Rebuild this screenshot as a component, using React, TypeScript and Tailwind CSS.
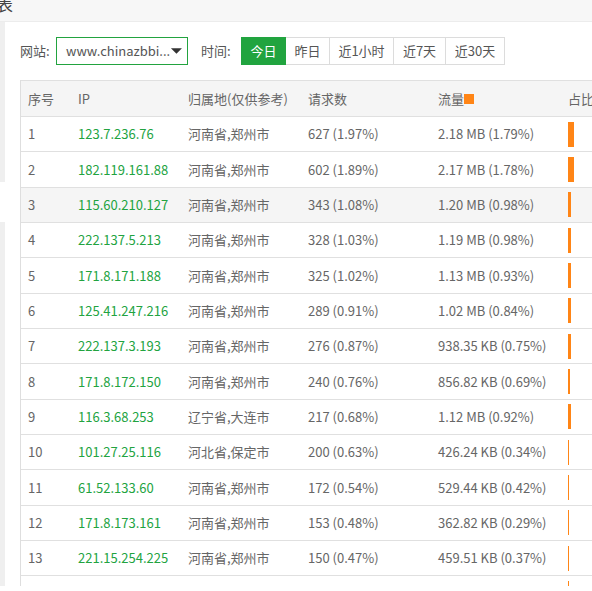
import React from "react";

type Row = { ip: string; loc: string; req: string; flow: string; w: number };

const rows: Row[] = [
  { ip: "123.7.236.76", loc: "河南省,郑州市", req: "627 (1.97%)", flow: "2.18 MB (1.79%)", w: 6 },
  { ip: "182.119.161.88", loc: "河南省,郑州市", req: "602 (1.89%)", flow: "2.17 MB (1.78%)", w: 6 },
  { ip: "115.60.210.127", loc: "河南省,郑州市", req: "343 (1.08%)", flow: "1.20 MB (0.98%)", w: 3 },
  { ip: "222.137.5.213", loc: "河南省,郑州市", req: "328 (1.03%)", flow: "1.19 MB (0.98%)", w: 3 },
  { ip: "171.8.171.188", loc: "河南省,郑州市", req: "325 (1.02%)", flow: "1.13 MB (0.93%)", w: 3 },
  { ip: "125.41.247.216", loc: "河南省,郑州市", req: "289 (0.91%)", flow: "1.02 MB (0.84%)", w: 3 },
  { ip: "222.137.3.193", loc: "河南省,郑州市", req: "276 (0.87%)", flow: "938.35 KB (0.75%)", w: 3 },
  { ip: "171.8.172.150", loc: "河南省,郑州市", req: "240 (0.76%)", flow: "856.82 KB (0.69%)", w: 2 },
  { ip: "116.3.68.253", loc: "辽宁省,大连市", req: "217 (0.68%)", flow: "1.12 MB (0.92%)", w: 3 },
  { ip: "101.27.25.116", loc: "河北省,保定市", req: "200 (0.63%)", flow: "426.24 KB (0.34%)", w: 1 },
  { ip: "61.52.133.60", loc: "河南省,郑州市", req: "172 (0.54%)", flow: "529.44 KB (0.42%)", w: 1 },
  { ip: "171.8.173.161", loc: "河南省,郑州市", req: "153 (0.48%)", flow: "362.82 KB (0.29%)", w: 1 },
  { ip: "221.15.254.225", loc: "河南省,郑州市", req: "150 (0.47%)", flow: "459.51 KB (0.37%)", w: 1 },
  { ip: "", loc: "", req: "", flow: "", w: 1 },
];

const btns = [
  { t: "今日", w: "w-[45px]", active: true },
  { t: "昨日", w: "w-[44px]" },
  { t: "近1小时", w: "w-[64px]" },
  { t: "近7天", w: "w-[52px]" },
  { t: "近30天", w: "w-[59px]" },
];

export default function App() {
  return (
    <div
      className="w-[592px] h-[591px] bg-white overflow-hidden text-[13px] text-[#666]"
      style={{ fontFamily: '"Microsoft YaHei", "Noto Sans CJK SC", "Noto Sans", sans-serif' }}
    >
      <div className="h-[586px] overflow-hidden flex flex-col">
        <div className="h-[22px] shrink-0 bg-[#f7f7f7] border-b border-[#ececec] overflow-hidden">
          <span className="block -ml-[4px] -mt-[7px] text-[17px] leading-[22px] text-[#444]">表</span>
        </div>
        <div className="flex flex-1 min-h-0">
          <div className="w-[5px] shrink-0 flex flex-col">
            <div className="h-[160px] bg-[#efefef]" />
            <div className="h-[40px] bg-white" />
            <div className="flex-1 bg-[#efefef]" />
          </div>
          <div className="flex-1 min-w-0 bg-white pl-[15px] pt-[15px] overflow-hidden">
            <div className="flex items-center h-[28px]">
              <span className="text-[#555] w-[36px]">网站:</span>
              <div className="w-[132px] h-[28px] border border-[#22a33f] flex items-center justify-between pl-[9px] pr-[3px]">
                <span className="text-[#555] whitespace-nowrap">www.chinazbbi...</span>
                <svg width="14" height="8" viewBox="0 0 14 8" className="mr-[1px]">
                  <polygon points="1,1 13,1 7,7" fill="#333" />
                </svg>
              </div>
              <span className="text-[#555] ml-[13px] w-[40px]">时间:</span>
              <div className="flex h-[28px]">
                {btns.map((b, i) => (
                  <div
                    key={i}
                    className={`${b.w} h-[28px] flex items-center justify-center ${
                      b.active
                        ? "bg-[#21a43f] text-white"
                        : "border-t border-b border-r border-[#dcdcdc] text-[#555]"
                    }`}
                  >
                    {b.t}
                  </div>
                ))}
              </div>
            </div>
            <div className="mt-[15px] w-[700px] border-l border-[#dedede]">
              <div className="h-[37px] flex items-center bg-[#f5f5f5] border-t border-b border-[#e0e0e0]">
                <div className="w-[57px] pl-[7px]">序号</div>
                <div className="w-[110px]">IP</div>
                <div className="w-[120px]">归属地(仅供参考)</div>
                <div className="w-[130px]">请求数</div>
                <div className="w-[130px] flex items-center">
                  流量<span className="inline-block w-[10px] h-[10px] bg-[#ff8516]" />
                </div>
                <div className="flex-1">占比</div>
              </div>
              {rows.map((r, i) => (
                <div
                  key={i}
                  className={`h-[35.33px] flex items-center border-b border-[#e0e0e0] ${
                    i === 2 ? "bg-[#f5f5f5]" : "bg-white"
                  }`}
                >
                  <div className="w-[57px] pl-[7px]">{r.ip ? i + 1 : ""}</div>
                  <div className="w-[110px] text-[#22a33f]">{r.ip}</div>
                  <div className="w-[120px]">{r.loc}</div>
                  <div className="w-[130px]">{r.req}</div>
                  <div className="w-[130px]">{r.flow}</div>
                  <div className="flex-1 flex items-center">
                    <div className="h-[25px] bg-[#ff8516]" style={{ width: r.w }} />
                  </div>
                </div>
              ))}
            </div>
          </div>
        </div>
      </div>
    </div>
  );
}
